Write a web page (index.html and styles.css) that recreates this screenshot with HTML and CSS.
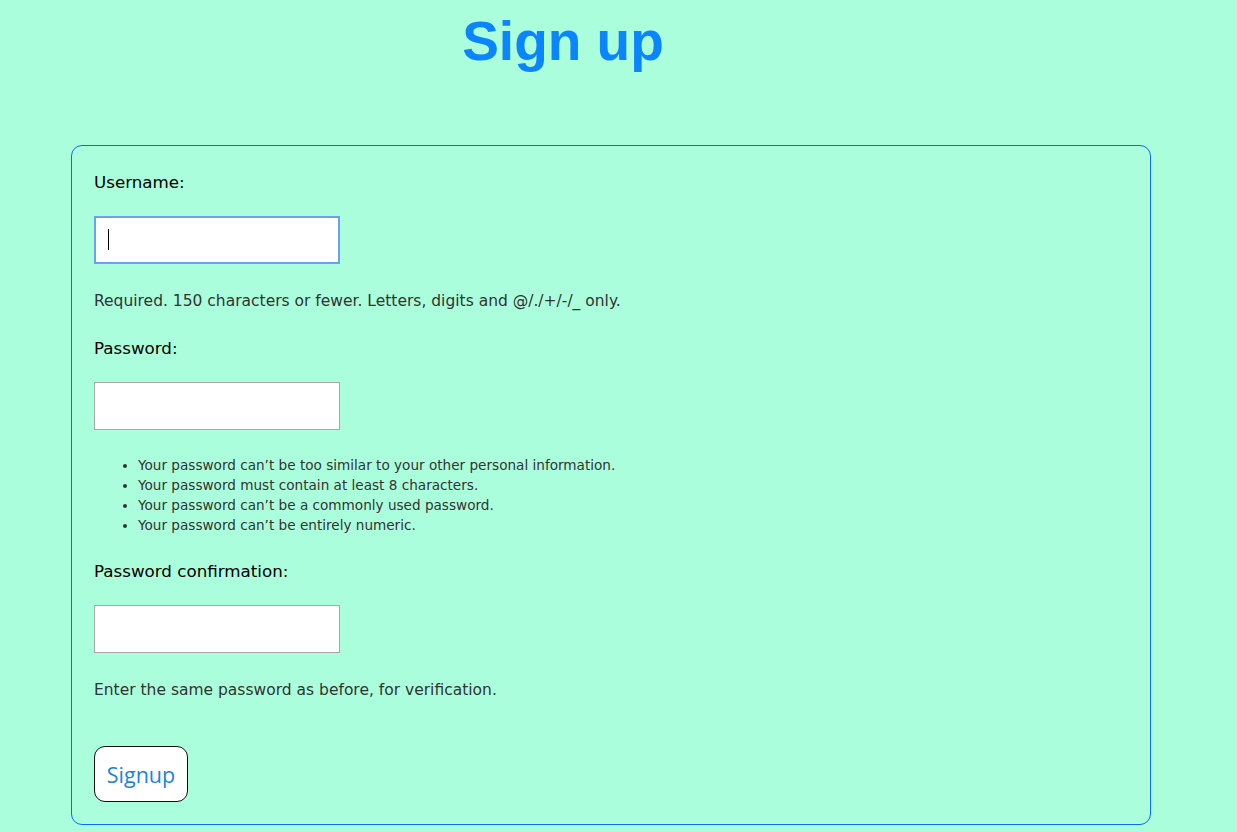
FILE: index.html
```html
<!DOCTYPE html>
<html lang="en">
<head>
<meta charset="utf-8">
<title>Sign up</title>
<link rel="stylesheet" href="styles.css">
</head>
<body>
<header class="page-header">
  <h1 class="title">Sign up</h1>
</header>
<main class="card">
  <form class="signup-form">
    <label class="field-label" for="id_username">Username:</label>
    <span class="input-wrap">
      <input class="text-input focused" type="text" id="id_username">
      <span class="caret"></span>
    </span>
    <p class="help">Required. 150 characters or fewer. Letters, digits and @/./+/-/_ only.</p>

    <label class="field-label" for="id_password1">Password:</label>
    <input class="text-input" type="password" id="id_password1">
    <ul class="help-list">
      <li>Your password can’t be too similar to your other personal information.</li>
      <li>Your password must contain at least 8 characters.</li>
      <li>Your password can’t be a commonly used password.</li>
      <li>Your password can’t be entirely numeric.</li>
    </ul>

    <label class="field-label" for="id_password2">Password confirmation:</label>
    <input class="text-input" type="password" id="id_password2">
    <p class="help">Enter the same password as before, for verification.</p>

    <button class="submit-btn" type="button">Signup</button>
  </form>
</main>
</body>
</html>
```

FILE: styles.css
```css
html, body {
  margin: 0;
  padding: 0;
}
body {
  background: #abfedc;
  font-family: "Comic Sans MS", "DejaVu Sans", sans-serif;
  color: #000;
  height: 832px;
  overflow: hidden;
}
.page-header {
  width: 1126px;
  text-align: center;
  height: 145px;
}
.title {
  margin: 0;
  padding-top: 6px;
  font-family: "Comic Sans MS", "Liberation Sans", sans-serif;
  font-size: 55px;
  line-height: 70px;
  font-weight: bold;
  color: #0a84ff;
}
.card {
  margin-left: 71px;
  width: 1080px;
  border: 1px solid #0a6cf5;
  border-radius: 11px;
  padding: 24px 22px 22px;
  box-sizing: border-box;
}
.signup-form {
  display: flex;
  flex-direction: column;
  align-items: flex-start;
}
.field-label {
  font-size: 16.7px;
  line-height: 24px;
  color: #000;
  margin-bottom: 22px;
}
.input-wrap {
  position: relative;
  display: block;
}
.caret {
  position: absolute;
  left: 14px;
  top: 13px;
  width: 1px;
  height: 21px;
  background: #000;
}
.text-input {
  display: block;
  width: 246px;
  height: 48px;
  box-sizing: border-box;
  border: 1px solid #a8a8a8;
  background: #fff;
  margin: 0;
  padding: 0 12px;
  font-size: 16px;
  outline: none;
}
.text-input.focused {
  border: 2px solid #6f9ff0;
}
.help {
  margin: 27px 0 25px;
  font-size: 15.5px;
  line-height: 20px;
  color: #333;
}
.help-list {
  margin: 25px 0 24px;
  padding-left: 44px;
  font-size: 13.6px;
  line-height: 20px;
  color: #333;
}
.submit-btn {
  margin-top: 21px;
  width: 94px;
  height: 56px;
  background: #fff;
  border: 1px solid #111;
  border-radius: 11px;
  color: #1a84dc;
  font-family: "Open Sans", "DejaVu Sans", sans-serif;
  font-size: 21.5px;
  padding: 0;
  cursor: pointer;
}
```
